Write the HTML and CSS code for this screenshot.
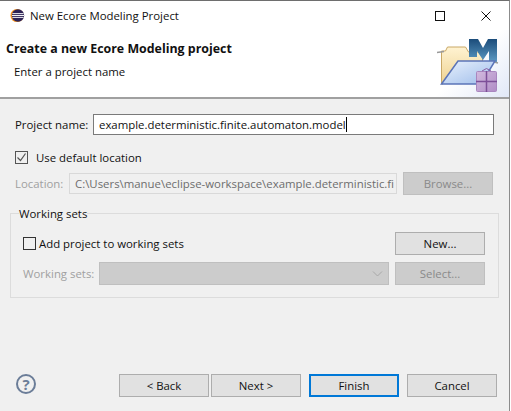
FILE: index.html
```html
<!DOCTYPE html>
<html lang="en">
<head>
    <meta charset="UTF-8">
    <title>New Ecore Modeling Project</title>
    <link rel="stylesheet" href="styles.css">
</head>
<body>
    <div class="window">
        <div class="titlebar">
            <svg class="app-icon" width="15" height="15" viewBox="0 0 16 16">
                <circle cx="7.5" cy="8" r="7" fill="#f7941e"/>
                <circle cx="8.5" cy="8" r="6.6" fill="#2c2255"/>
                <path d="M2.5 6h12M2 8h13M2.5 10h12" stroke="#fff" stroke-width="1"/>
            </svg>
            <span class="title">New Ecore Modeling Project</span>
            <div class="win-buttons">
                <svg width="12" height="12" viewBox="0 0 12 12"><rect x="1.5" y="1.5" width="9" height="9" fill="none" stroke="#111"/></svg>
                <svg width="12" height="12" viewBox="0 0 12 12"><path d="M1.5 1.5l9 9M10.5 1.5l-9 9" stroke="#111" fill="none"/></svg>
            </div>
        </div>
        <div class="banner">
            <div class="banner-text">
                <h1>Create a new Ecore Modeling project</h1>
                <p>Enter a project name</p>
            </div>
            <svg class="banner-icon" width="64" height="60" viewBox="0 0 64 60">
                <defs>
                    <linearGradient id="front" x1="0" y1="0" x2="1" y2="1">
                        <stop offset="0" stop-color="#eaf2fd"/>
                        <stop offset="1" stop-color="#9dbcea"/>
                    </linearGradient>
                    <linearGradient id="back" x1="0" y1="0" x2="0" y2="1">
                        <stop offset="0" stop-color="#fff3d2"/>
                        <stop offset="1" stop-color="#eed291"/>
                    </linearGradient>
                    <linearGradient id="emm" x1="0" y1="0" x2="0" y2="1">
                        <stop offset="0" stop-color="#1b4c7a"/>
                        <stop offset="1" stop-color="#5c9ac4"/>
                    </linearGradient>
                    <linearGradient id="gift" x1="0" y1="0" x2="1" y2="1">
                        <stop offset="0" stop-color="#d2bade"/>
                        <stop offset="1" stop-color="#b08cc6"/>
                    </linearGradient>
                </defs>
                <path d="M5.500 48V15h4l2-4h18l3 5h14v12H20L7 48z" fill="url(#back)" stroke="#c9a866"/>
                <path d="M33 3h9l5 9 5-9h9v23h-8V15l-6 9-6-9v6h-8z" fill="url(#emm)"/>
                <path d="M1 16.500l7-1M54 25l8 2" stroke="#9a9a9a" stroke-width="1.5"/>
                <path d="M5.500 48L22 25h37L45 48z" fill="url(#front)" stroke="#5b74b8" stroke-width="1.5"/>
                <rect x="40.500" y="35.500" width="20" height="20" rx="1" fill="url(#gift)" stroke="#a986bf"/>
                <path d="M50.500 35v21M40 45.500h21" stroke="#7d4f98" stroke-width="1.5"/>
                <path d="M46 35l4.500-2.500 4.500 2.500" stroke="#8a5ea3" fill="none"/>
            </svg>
        </div>
        <div class="content">
            <div class="row name-row">
                <label class="label">Project name:</label>
                <div class="text-field">example.deterministic.finite.automaton.model<span class="caret"></span></div>
            </div>
            <div class="default-row">
                <span class="checkbox checked">
                    <svg width="11" height="11" viewBox="0 0 11 11"><path d="M1.5 5.500l3 3 5-7" fill="none" stroke="#555" stroke-width="1.2"/></svg>
                </span>
                <span>Use default location</span>
            </div>
            <div class="row location-row">
                <label class="label disabled">Location:</label>
                <div class="text-field readonly">C:\Users\manue\eclipse-workspace\example.deterministic.fi</div>
                <button class="btn browse" disabled>Browse...</button>
            </div>
            <fieldset class="group">
                <legend>Working sets</legend>
                <div class="group-row add-row">
                    <span class="checkbox"></span>
                    <span class="add-label">Add project to working sets</span>
                    <button class="btn">New...</button>
                </div>
                <div class="group-row">
                    <label class="label disabled">Working sets:</label>
                    <div class="combo">
                        <svg width="11" height="6" viewBox="0 0 11 6"><path d="M1 0.500l4.500 4.500 4.500-4.500" fill="none" stroke="#a8a8a8"/></svg>
                    </div>
                    <button class="btn" disabled>Select...</button>
                </div>
            </fieldset>
        </div>
        <div class="footer">
            <div class="help">?</div>
            <div class="footer-buttons">
                <button class="btn">&lt; Back</button>
                <button class="btn">Next &gt;</button>
                <button class="btn default">Finish</button>
                <button class="btn">Cancel</button>
            </div>
        </div>
    </div>
</body>
</html>
```

FILE: styles.css
```css
html, body {
    margin: 0;
    padding: 0;
    background: #fff;
}
.window {
    width: 510px;
    height: 411px;
    box-sizing: border-box;
    border-top: 1px solid #6e6e6e;
    border-right: 1px solid #8c8c8c;
    background: #f0f0f0;
    font-family: "Open Sans", "Noto Sans", sans-serif;
    font-size: 11.4px;
    color: #111;
    display: flex;
    flex-direction: column;
}
.titlebar {
    height: 29px;
    background: #fff;
    display: flex;
    align-items: center;
    padding-left: 10px;
}
.app-icon {
    margin-right: 5px;
}
.title {
    flex: 1;
}
.win-buttons {
    display: flex;
    gap: 34px;
    padding-right: 17px;
}
.banner {
    height: 67px;
    background: linear-gradient(135deg, #fff 87%, #e1e8f7 100%);
    border-bottom: 2px solid #a0a0a0;
    display: flex;
    justify-content: space-between;
    align-items: flex-end;
}
.banner-text {
    align-self: flex-start;
    padding-top: 11px;
}
.banner-text h1 {
    margin: 0 0 0 6px;
    font-size: 12.4px;
    line-height: 16px;
    font-weight: 700;
}
.banner-text p {
    margin: 7px 0 0 14px;
    line-height: 16px;
}
.banner-icon {
    margin: 0 9px 1px 0;
}
.content {
    flex: 1;
    padding: 15px 10px 0 10px;
}
.row {
    display: flex;
    align-items: center;
}
.label {
    white-space: nowrap;
}
.disabled {
    color: #a0a0a0;
}
.name-row {
    padding-right: 5px;
}
.name-row .label {
    margin-left: 5px;
    width: 78px;
}
.text-field {
    flex: 1;
    height: 21px;
    line-height: 19px;
    box-sizing: border-box;
    background: #fff;
    border: 1px solid #7a7a7a;
    padding-left: 5px;
    white-space: nowrap;
    overflow: hidden;
}
.caret {
    display: inline-block;
    width: 1px;
    height: 15px;
    background: #000;
    vertical-align: -3px;
}
.default-row {
    display: flex;
    align-items: center;
    gap: 8px;
    height: 16px;
    margin: 14px 0 0 5px;
}
.checkbox {
    width: 13px;
    height: 13px;
    box-sizing: border-box;
    border: 1px solid #333;
    background: #f0f0f0;
    display: flex;
    align-items: center;
    justify-content: center;
}
.checkbox.checked {
    border-color: #555;
}
.location-row {
    margin: 7px 0 0 5px;
}
.location-row .label {
    width: 54px;
}
.readonly {
    flex: none;
    width: 328px;
    border: 1px solid #d9d9d9;
    background: #f0f0f0;
    color: #6d6d6d;
}
.btn {
    width: 90px;
    height: 23px;
    padding: 0;
    box-sizing: border-box;
    background: #e1e1e1;
    border: 1px solid #adadad;
    font: inherit;
    color: #111;
}
.btn:disabled {
    background: #ccc;
    border-color: #bfbfbf;
    color: #8a8a8a;
}
.browse {
    margin-left: 6px;
}
.group {
    margin: 9px 0 0 0;
    padding: 0 13px 0 12px;
    height: 94px;
    box-sizing: border-box;
    border: 1px solid #dcdcdc;
}
.group legend {
    padding: 2px 0 0 0;
    margin-left: -4px;
    line-height: 16px;
}
.group-row {
    display: flex;
    align-items: center;
}
.add-row {
    margin-top: 10px;
}
.add-row .add-label {
    flex: 1;
    margin-left: 3px;
}
.group-row + .group-row {
    margin-top: 7px;
}
.group-row .label {
    width: 76px;
}
.combo {
    width: 290px;
    height: 23px;
    box-sizing: border-box;
    background: #ccc;
    border: 1px solid #bfbfbf;
    margin-right: 6px;
    display: flex;
    align-items: center;
    justify-content: flex-end;
    padding-right: 5px;
}
.footer {
    height: 51px;
    box-sizing: border-box;
    display: flex;
    align-items: flex-start;
    justify-content: space-between;
    padding: 14px 12px 0 16px;
}
.help {
    width: 20px;
    height: 20px;
    box-sizing: border-box;
    border: 2px solid #6b7d98;
    border-radius: 50%;
    color: #6b7d98;
    font-size: 15px;
    font-weight: 700;
    line-height: 16px;
    text-align: center;
}
.footer-buttons {
    display: flex;
    gap: 2px;
}
.footer-buttons .default {
    border: 2px solid #0078d7;
    margin: 0 6px;
}
```
